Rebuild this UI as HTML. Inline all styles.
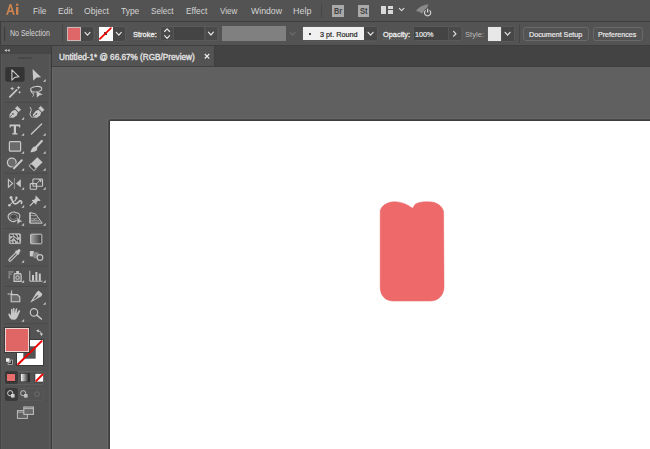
<!DOCTYPE html>
<html><head><meta charset="utf-8">
<style>
*{margin:0;padding:0;box-sizing:border-box}
html,body{width:650px;height:449px;overflow:hidden;background:#535353;font-family:"Liberation Sans",sans-serif}
.a{position:absolute}
.t{position:absolute;white-space:nowrap;line-height:1;transform-origin:0 0}
svg{position:absolute;overflow:visible}
</style></head><body>
<div class="a" style="left:0px;top:0px;width:650px;height:21px;background:#535353"></div>
<div class="a" style="left:0px;top:21px;width:650px;height:1px;background:#3e3e3e"></div>
<svg style="left:0;top:0" width="1" height="1"><path fill-rule="evenodd" d="M6.1,14.7 L9.6,3.9 L11.3,3.9 L14.8,14.7 L12.9,14.7 L12.1,12.1 L8.8,12.1 L8.0,14.7 Z M9.3,10.6 L10.45,6.7 L11.6,10.6 Z" fill="#cd8450"/><rect x="16" y="7" width="2.3" height="7.7" fill="#cd8450"/><rect x="16" y="3.7" width="2.3" height="2" fill="#cd8450"/></svg>
<div class="a" style="left:321px;top:3px;width:1px;height:15px;background:#474747"></div>
<div class="a" style="left:0px;top:22px;width:650px;height:23px;background:#535353"></div>
<div class="a" style="left:0px;top:21px;width:1px;height:25px;background:#3e3e3e"></div>
<div class="a" style="left:0px;top:45px;width:650px;height:1px;background:#3e3e3e"></div>
<svg style="left:0;top:0" width="650" height="60"><rect x="4" y="27.2" width="1.3" height="1.5" fill="#3a3a3a"/><rect x="4" y="29.2" width="1.3" height="1.5" fill="#3a3a3a"/><rect x="4" y="31.2" width="1.3" height="1.5" fill="#3a3a3a"/><rect x="4" y="33.2" width="1.3" height="1.5" fill="#3a3a3a"/><rect x="4" y="35.2" width="1.3" height="1.5" fill="#3a3a3a"/><rect x="4" y="37.2" width="1.3" height="1.5" fill="#3a3a3a"/><rect x="4" y="39.2" width="1.3" height="1.5" fill="#3a3a3a"/></svg>
<div class="a" style="left:62px;top:24px;width:1px;height:19px;background:#474747"></div>
<div class="a" style="left:332.2px;top:4.8px;width:11.9px;height:11.8px;background:#a9a9a9"></div>
<div class="a" style="left:357.8px;top:4.8px;width:11.6px;height:11.8px;background:#a9a9a9"></div>
<div class="a" style="left:380.8px;top:5.7px;width:5.7px;height:8.2px;background:#d8d8d8"></div>
<div class="a" style="left:387.6px;top:5.7px;width:5.5px;height:3.7px;background:#d8d8d8"></div>
<div class="a" style="left:387.6px;top:10.2px;width:5.5px;height:3.7px;background:#d8d8d8"></div>
<svg style="left:0;top:0" width="1" height="1"><path d="M399.3,8.3 L401.6,10.7 L403.90000000000003,8.3" fill="none" stroke="#dcdcdc" stroke-width="1.1" stroke-linecap="round" stroke-linejoin="round"/></svg>
<svg style="left:0;top:0" width="1" height="1"><path d="M416.6,10 C419,7 423,4.6 428.4,4.2 C427.6,7.6 425.4,10.6 421.6,13.6 Z" fill="#8a8a8a"/><path d="M418,11.6 L415.8,11.2 L417.8,9.2 Z" fill="#8a8a8a"/><circle cx="427.6" cy="12.8" r="4.2" fill="#535353"/><path d="M425.6,10.4 A3.1,3.1 0 1 0 429.6,10.4" fill="none" stroke="#d4d4d4" stroke-width="1.2"/><line x1="427.6" y1="8.8" x2="427.6" y2="12.6" stroke="#d4d4d4" stroke-width="1.2"/></svg>
<div class="a" style="left:65px;top:26px;width:30px;height:16px;border:1px solid #5a5a5a;border-radius:3px"></div>
<div class="a" style="left:81px;top:27px;width:12px;height:14px;background:#474747;border-radius:0 2px 2px 0"></div>
<div class="a" style="left:67px;top:27px;width:14px;height:14px;background:#e06767;border:1px solid #d0b8b8"></div>
<svg style="left:0;top:0" width="1" height="1"><path d="M85.0,32.4 L87.5,35.199999999999996 L90.0,32.4" fill="none" stroke="#e6e6e6" stroke-width="1.15" stroke-linecap="round" stroke-linejoin="round"/></svg>
<div class="a" style="left:96.5px;top:26px;width:29.5px;height:16px;border:1px solid #5a5a5a;border-radius:3px"></div>
<div class="a" style="left:112.5px;top:27px;width:12px;height:14px;background:#474747;border-radius:0 2px 2px 0"></div>
<div class="a" style="left:98.5px;top:27px;width:14px;height:14px;background:#fdfdfd"></div>
<div class="a" style="left:103.6px;top:32.1px;width:3.2px;height:3.3px;background:#4e4e4e"></div>
<svg style="left:0;top:0" width="1" height="1"><line x1="99.9" y1="38.9" x2="110.9" y2="28.1" stroke="#f20000" stroke-width="1.7" stroke-linecap="round"/></svg>
<svg style="left:0;top:0" width="1" height="1"><path d="M116.3,32.4 L118.8,35.199999999999996 L121.3,32.4" fill="none" stroke="#e6e6e6" stroke-width="1.15" stroke-linecap="round" stroke-linejoin="round"/></svg>
<svg style="left:0;top:0" width="1" height="1"><line x1="134" y1="39.3" x2="156" y2="39.3" stroke="#7a7a7a" stroke-width="0.6" stroke-dasharray="0.8 0.8"/></svg>
<div class="a" style="left:160px;top:26px;width:58.5px;height:15px;border:1px solid #5a5a5a;border-radius:3px"></div>
<div class="a" style="left:161px;top:27px;width:11.5px;height:13px;background:#4a4a4a"></div>
<svg style="left:0;top:0" width="1" height="1"><path d="M164.6,31.5 L167.1,28.9 L169.6,31.5" fill="none" stroke="#e6e6e6" stroke-width="1.15" stroke-linecap="round" stroke-linejoin="round"/></svg>
<svg style="left:0;top:0" width="1" height="1"><path d="M164.6,35.7 L167.1,38.3 L169.6,35.7" fill="none" stroke="#e6e6e6" stroke-width="1.15" stroke-linecap="round" stroke-linejoin="round"/></svg>
<div class="a" style="left:174.2px;top:27.4px;width:30.2px;height:12.3px;background:#444444"></div>
<div class="a" style="left:205.7px;top:27.4px;width:11.8px;height:12.3px;background:#4a4a4a"></div>
<svg style="left:0;top:0" width="1" height="1"><path d="M208.4,32.2 L210.9,35.0 L213.4,32.2" fill="none" stroke="#e6e6e6" stroke-width="1.15" stroke-linecap="round" stroke-linejoin="round"/></svg>
<div class="a" style="left:222px;top:26.2px;width:64px;height:14.6px;background:#808080"></div>
<svg style="left:0;top:0" width="1" height="1"><path d="M290.2,32.300000000000004 L292.7,35.1 L295.2,32.300000000000004" fill="none" stroke="#6c6c6c" stroke-width="1.15" stroke-linecap="round" stroke-linejoin="round"/></svg>
<div class="a" style="left:302px;top:26px;width:76px;height:15.5px;border:1px solid #5a5a5a;border-radius:3px"></div>
<div class="a" style="left:303.4px;top:27px;width:61px;height:13.4px;background:#f0f0f0"></div>
<div class="a" style="left:309.1px;top:33.1px;width:1.9px;height:1.9px;background:#111;border-radius:50%"></div>
<div class="a" style="left:364.4px;top:27px;width:12.5px;height:13.4px;background:#474747"></div>
<svg style="left:0;top:0" width="1" height="1"><path d="M368.1,32.300000000000004 L370.6,35.1 L373.1,32.300000000000004" fill="none" stroke="#e6e6e6" stroke-width="1.15" stroke-linecap="round" stroke-linejoin="round"/></svg>
<svg style="left:0;top:0" width="1" height="1"><line x1="383" y1="39.3" x2="409" y2="39.3" stroke="#7a7a7a" stroke-width="0.6" stroke-dasharray="0.8 0.8"/></svg>
<div class="a" style="left:413px;top:26px;width:49.5px;height:15px;border:1px solid #5a5a5a;border-radius:3px"></div>
<div class="a" style="left:414.2px;top:27px;width:34.3px;height:13px;background:#444444"></div>
<div class="a" style="left:448.5px;top:27px;width:12.7px;height:13px;background:#4a4a4a"></div>
<svg style="left:0;top:0" width="1" height="1"><path d="M453.6,31.4 L456,33.8 L453.6,36.2" fill="none" stroke="#e6e6e6" stroke-width="1.2" stroke-linecap="round" stroke-linejoin="round"/></svg>
<div class="a" style="left:486.5px;top:26px;width:28.5px;height:16px;border:1px solid #5a5a5a;border-radius:3px"></div>
<div class="a" style="left:487.7px;top:27px;width:13.8px;height:13.8px;background:#e8e8e8"></div>
<div class="a" style="left:501.5px;top:27px;width:12.3px;height:13.8px;background:#474747"></div>
<svg style="left:0;top:0" width="1" height="1"><path d="M505.1,32.300000000000004 L507.6,35.1 L510.1,32.300000000000004" fill="none" stroke="#e6e6e6" stroke-width="1.15" stroke-linecap="round" stroke-linejoin="round"/></svg>
<div class="a" style="left:519px;top:24px;width:1px;height:19px;background:#474747"></div>
<div class="a" style="left:523.2px;top:27.2px;width:65.7px;height:13.5px;border:1px solid #696969;border-radius:3px"></div>
<div class="a" style="left:593px;top:27.2px;width:50px;height:13.5px;border:1px solid #696969;border-radius:3px"></div>
<div class="a" style="left:52px;top:46px;width:598px;height:20px;background:#434343"></div>
<div class="a" style="left:52px;top:46px;width:162px;height:20px;background:#535353"></div>
<div class="a" style="left:214px;top:46px;width:1px;height:20px;background:#3e3e3e"></div>
<div class="a" style="left:52px;top:66px;width:598px;height:1px;background:#404040"></div>
<svg style="left:0;top:0" width="1" height="1"><path d="M205.2,54.4 L208.9,58.1 M208.9,54.4 L205.2,58.1" stroke="#f2f2f2" stroke-width="1.15" stroke-linecap="square"/></svg>
<div class="a" style="left:52px;top:67px;width:598px;height:382px;background:#606060"></div>
<div class="a" style="left:107px;top:118px;width:543px;height:331px;background:#676767;border-radius:4px 0 0 0"></div>
<div class="a" style="left:108px;top:119px;width:542px;height:330px;background:#484848;border-radius:3px 0 0 0"></div>
<div class="a" style="left:109px;top:120px;width:541px;height:329px;background:#3c3c3c;border-radius:2px 0 0 0"></div>
<div class="a" style="left:110px;top:121px;width:540px;height:328px;background:#ffffff"></div>
<svg style="left:0;top:0" width="1" height="1"><path d="M380.2,211 C381,206.5 386,202.2 393.8,201.8 C400.5,201.6 406.5,203.8 412.6,208.3 L415.2,204.2 C418.5,202.3 422.5,201.8 428.3,201.8 C435.5,201.8 442,205 443.6,211.5 L444,287 C444,295 438.5,301 430.2,301 L393,301 C385.5,301 380.2,295.5 380.2,287.4 Z" fill="#ee6a6a" stroke="#e96464" stroke-width="0.5"/></svg>
<div class="a" style="left:0px;top:46px;width:51px;height:403px;background:#535353"></div>
<div class="a" style="left:0px;top:46px;width:51px;height:8px;background:#474747"></div>
<div class="a" style="left:0px;top:46px;width:1px;height:403px;background:#454545"></div>
<div class="a" style="left:51px;top:46px;width:1px;height:403px;background:#3a3a3a"></div>
<div class="a" style="left:1px;top:54px;width:1px;height:395px;background:#585858"></div>
<div class="a" style="left:49px;top:55px;width:1px;height:394px;background:#5a5a5a"></div>
<div class="a" style="left:52px;top:67px;width:1px;height:382px;background:#686868"></div>
<svg style="left:0;top:0" width="1" height="1"><path d="M6.8,49 L4.3,50.4 L6.8,51.8 Z M9.6,49 L7.1,50.4 L9.6,51.8 Z" fill="#d0d0d0"/></svg>
<svg style="left:0;top:0" width="1" height="1"><rect x="18.5" y="57.3" width="1.3" height="1.5" fill="#3a3a3a"/><rect x="20.8" y="57.3" width="1.3" height="1.5" fill="#3a3a3a"/><rect x="23.1" y="57.3" width="1.3" height="1.5" fill="#3a3a3a"/><rect x="25.4" y="57.3" width="1.3" height="1.5" fill="#3a3a3a"/><rect x="27.7" y="57.3" width="1.3" height="1.5" fill="#3a3a3a"/><rect x="30.0" y="57.3" width="1.3" height="1.5" fill="#3a3a3a"/></svg>
<svg style="left:0;top:0" width="52" height="449"><rect x="4" y="101.9" width="43" height="1" fill="#4a4a4a"/><rect x="4" y="172.8" width="43" height="1" fill="#4a4a4a"/><rect x="4" y="228.0" width="43" height="1" fill="#4a4a4a"/><rect x="4" y="265.5" width="43" height="1" fill="#4a4a4a"/><rect x="4" y="285.9" width="43" height="1" fill="#4a4a4a"/><rect x="4" y="323.2" width="43" height="1" fill="#4a4a4a"/><rect x="5.3" y="67.1" width="19.3" height="14.6" rx="2" fill="#343434"/><path d="M11.9,69.8 L19,76.8 L14.8,77.4 L11.9,80.2 Z" fill="none" stroke="#c8c8c8" stroke-width="1.15" stroke-linejoin="round"/><path d="M32.6,69 L41.1,77.2 L36.6,77.6 L33.2,80.8 Z" fill="#c8c8c8" stroke="none" stroke-width="1" /><path d="M45.7,79 L45.7,81.7 L43,81.7 Z" fill="#c4c4c4"/><path d="M9.8,96.8 L16.8,89.8" fill="none" stroke="#c8c8c8" stroke-width="1.7" stroke-linecap="round"/><path d="M12.2,86.6 L12.9,88 L14.3,88.6 L12.9,89.2 L12.2,90.6 L11.5,89.2 L10.1,88.6 L11.5,88 Z" fill="#c8c8c8" stroke="none" stroke-width="1" /><path d="M18.6,85.8 L19.2,87.1 L20.5,87.7 L19.2,88.3 L18.6,89.6 L18,88.3 L16.7,87.7 L18,87.1 Z" fill="#c8c8c8" stroke="none" stroke-width="1" /><path d="M19.6,90.8 L20.1,91.8 L21.1,92.3 L20.1,92.8 L19.6,93.8 L19.1,92.8 L18.1,92.3 L19.1,91.8 Z" fill="#c8c8c8" stroke="none" stroke-width="1" /><ellipse cx="36.2" cy="89.2" rx="5.6" ry="2.7" transform="rotate(-8 36.2 89.2)" fill="none" stroke="#c8c8c8" stroke-width="1.1"/><path d="M31.6,90.4 C30.8,92 31.6,93.4 33,93.4 C34.2,93.4 34,95.4 32.6,96.6" fill="none" stroke="#c8c8c8" stroke-width="1.0" /><path d="M36,90.2 L43.4,94.8 L39.8,95.5 L36.6,98 Z" fill="#c8c8c8" stroke="#535353" stroke-width="0.6" /><path d="M9.2,117.6 L9.8,114.2 L12.2,111 L15.2,109.8 L17.8,112.4 L16.8,115.2 L13.6,117.8 Z" fill="#c8c8c8" stroke="none" stroke-width="1" /><path d="M15.3,108.3 L17.3,106.3 L20.7,109.7 L18.7,111.7 Z" fill="#c8c8c8" stroke="#c8c8c8" stroke-width="0.6" stroke-linejoin="round"/><path d="M9.6,117.2 L12.6,114.2" fill="none" stroke="#5e5e5e" stroke-width="0.9" /><circle cx="13" cy="113.8" r="0.9" fill="#5e5e5e"/><path d="M24.099999999999998,117 L24.099999999999998,119.7 L21.4,119.7 Z" fill="#c4c4c4"/><path d="M32.599999999999994,117.6 L33.2,114.2 L35.599999999999994,111 L38.599999999999994,109.8 L41.2,112.4 L40.2,115.2 L37.0,117.8 Z" fill="#c8c8c8" stroke="none" stroke-width="1" /><path d="M38.7,108.3 L40.7,106.3 L44.099999999999994,109.7 L42.099999999999994,111.7 Z" fill="#c8c8c8" stroke="#c8c8c8" stroke-width="0.6" stroke-linejoin="round"/><path d="M33.0,117.2 L36.0,114.2" fill="none" stroke="#5e5e5e" stroke-width="0.9" /><circle cx="36.4" cy="113.8" r="0.9" fill="#5e5e5e"/><path d="M30,107 C31.2,108.4 31.6,110 30.6,112 C29.6,114 30,116.6 32.4,117.4" fill="none" stroke="#c8c8c8" stroke-width="1.0" /><path d="M9.6,124.4 L20.2,124.4 L20.2,127.6 L19.2,127.6 L18.8,126.2 L16,126.2 L16,133 L17.6,133.4 L17.6,134.6 L12.2,134.6 L12.2,133.4 L13.8,133 L13.8,126.2 L11,126.2 L10.6,127.6 L9.6,127.6 Z" fill="#c8c8c8" stroke="none" stroke-width="1" /><path d="M24.099999999999998,133 L24.099999999999998,135.7 L21.4,135.7 Z" fill="#c4c4c4"/><path d="M31.4,134 L41.6,124" fill="none" stroke="#c8c8c8" stroke-width="1.3" stroke-linecap="round"/><path d="M45.7,133 L45.7,135.7 L43,135.7 Z" fill="#c4c4c4"/><rect x="9.4" y="141.6" width="11.2" height="9.6" rx="1" fill="#6b6b6b" stroke="#c8c8c8" stroke-width="1.2"/><path d="M24.099999999999998,151 L24.099999999999998,153.7 L21.4,153.7 Z" fill="#c4c4c4"/><path d="M41.8,141 L35.8,147.6" fill="none" stroke="#c8c8c8" stroke-width="2.2" stroke-linecap="round"/><path d="M35.6,146.6 C37.4,147.2 37.8,149 36.6,150.4 C35.2,151.8 32.4,152 30.4,152.2 C31,150.4 31.6,148.6 32.8,147.4 C33.6,146.6 34.6,146.4 35.6,146.6 Z" fill="#c8c8c8" stroke="none" stroke-width="1" /><path d="M45.7,151 L45.7,153.7 L43,153.7 Z" fill="#c4c4c4"/><circle cx="11.8" cy="162.6" r="4.4" fill="#6b6b6b" stroke="#c8c8c8" stroke-width="1.2"/><path d="M14,168.2 L21.8,160.2" fill="none" stroke="#535353" stroke-width="3.4" stroke-linecap="round"/><path d="M14,168.2 L21.8,160.2" fill="none" stroke="#c8c8c8" stroke-width="2.0" stroke-linecap="round"/><path d="M24.099999999999998,168 L24.099999999999998,170.7 L21.4,170.7 Z" fill="#c4c4c4"/><path d="M37.3,157.2 L42.6,162.2 L36.2,168.6 L30.9,163.6 Z" fill="#c8c8c8" stroke="none" stroke-width="1" /><path d="M33.6,166.2 L34,166.6 L36.2,168.6 L34,170.6 L29,165.8 L31,163.6 Z" fill="#535353" stroke="#c8c8c8" stroke-width="1.0" /><path d="M31.4,165.6 L34.2,168.4" fill="none" stroke="#3a3a3a" stroke-width="1.4" /><path d="M45.7,168 L45.7,170.7 L43,170.7 Z" fill="#c4c4c4"/><path d="M8.4,179.6 L12.6,183.4 L8.4,187.2 Z" fill="none" stroke="#c8c8c8" stroke-width="1.1" /><path d="M20.8,179.2 L16,183.4 L20.8,187.6 Z" fill="#c8c8c8" stroke="none" stroke-width="1" /><path d="M14.4,178 L14.4,189" fill="none" stroke="#9a9a9a" stroke-width="0.9" /><path d="M24.099999999999998,187 L24.099999999999998,189.7 L21.4,189.7 Z" fill="#c4c4c4"/><rect x="32.9" y="179" width="9.6" height="7.2" rx="0.8" fill="none" stroke="#c8c8c8" stroke-width="1.1"/><path d="M35.4,184.8 L39.6,180.8" fill="none" stroke="#c8c8c8" stroke-width="1.0" /><path d="M41.4,179.2 L41.2,182.6 L38,179.4 Z" fill="#c8c8c8" stroke="none" stroke-width="1" /><rect x="30.2" y="183.6" width="6.4" height="5.6" rx="0.8" fill="none" stroke="#c8c8c8" stroke-width="1.1"/><path d="M45.7,187 L45.7,189.7 L43,189.7 Z" fill="#c4c4c4"/><circle cx="11" cy="197.4" r="1.5" fill="#c8c8c8"/><circle cx="16.4" cy="197.8" r="1.2" fill="#c8c8c8"/><path d="M11.2,198.6 C12.4,200 12.4,201.8 13.4,203 C14.8,204.4 17.2,203.8 18.6,202 C19.6,200.8 20.8,200.4 21.4,201.4 C21.8,202 21.8,202.8 21.4,203.4" fill="none" stroke="#c8c8c8" stroke-width="1.7" stroke-linecap="round"/><path d="M13,201.6 C14.6,201.6 15.6,200.6 16.2,199" fill="none" stroke="#c8c8c8" stroke-width="1.2" stroke-linecap="round"/><circle cx="9.4" cy="205.2" r="1.3" fill="#c8c8c8"/><path d="M9.6,205 L12.8,202.2" fill="none" stroke="#c8c8c8" stroke-width="1.0" /><path d="M24.099999999999998,205 L24.099999999999998,207.7 L21.4,207.7 Z" fill="#c4c4c4"/><path d="M35.8,195.6 L40.6,200.4 L39.6,201 L38.2,200.8 L36.4,202.6 L36.6,204 L35.8,204.6 L31.8,200.6 L32.4,199.8 L33.8,200 L35.6,198.2 L35.4,196.8 Z" fill="#c8c8c8" stroke="none" stroke-width="1" /><path d="M30.2,205.6 L33.6,202.2" fill="none" stroke="#c8c8c8" stroke-width="1.2" stroke-linecap="round"/><path d="M45.7,205 L45.7,207.7 L43,207.7 Z" fill="#c4c4c4"/><path d="M9.2,219.4 C7.4,217.4 7.8,214.2 10.4,213.4 C11.8,211.8 14.8,211.6 16.2,212.8 C18.6,212.8 20.4,214.6 19.8,217 C19.4,219 17.6,220.6 15.8,220.8 C14,222.2 10.8,221.8 9.2,219.4 Z" fill="none" stroke="#c8c8c8" stroke-width="1.1" /><ellipse cx="13.6" cy="216.8" rx="3.6" ry="2.6" fill="#464646" stroke="#8c8c8c" stroke-width="0.8"/><path d="M16.8,217.2 L22.6,221.6 L19.6,222.2 L17.4,224.4 Z" fill="#c8c8c8" stroke="#535353" stroke-width="0.5" /><path d="M24.099999999999998,223 L24.099999999999998,225.7 L21.4,225.7 Z" fill="#c4c4c4"/><path d="M30,212.6 L35.4,213.8 L42.2,223.2 L30,223.2 Z" fill="none" stroke="#c8c8c8" stroke-width="1.0" /><path d="M30,215.6 L36.4,215.6 M30,218.8 L37.6,218.8 M30,223.2 L36.2,218 M31,220.6 L39.2,220.6 M32.6,222 L40.6,222" fill="none" stroke="#b0b0b0" stroke-width="0.7" /><path d="M30,212.6 L30,223.2" fill="none" stroke="#c8c8c8" stroke-width="1.4" /><path d="M45.7,223 L45.7,225.7 L43,225.7 Z" fill="#c4c4c4"/><rect x="9.2" y="233.8" width="11.4" height="9.8" rx="0.8" fill="#b4b4b4" stroke="#c4c4c4" stroke-width="0.8"/><path d="M10.4,235.2 L12.4,235.6 M14.4,235 L16.6,237.2 M18.2,235.2 L18.8,236.6 M10.8,239.6 L13,237.6 M14.8,238.4 L17,240.6 M18.4,240.4 L18.8,242.2 M11,241.8 L11.6,242.4 M14,241.6 L14.4,242.4" fill="none" stroke="#3c3c3c" stroke-width="1.2" stroke-linecap="round"/><defs><linearGradient id="gr" x1="0" x2="1" y1="0" y2="0"><stop offset="0" stop-color="#a8a8a8"/><stop offset="1" stop-color="#383838"/></linearGradient><linearGradient id="gr2" x1="0" x2="1" y1="0" y2="0"><stop offset="0" stop-color="#ffffff"/><stop offset="1" stop-color="#111"/></linearGradient></defs><rect x="30.6" y="234.2" width="11.2" height="9.6" rx="0.6" fill="url(#gr)" stroke="#c8c8c8" stroke-width="1"/><path d="M9.4,261 C8.8,260.4 8.8,259.6 9.4,259 L16,252.4 L17.6,254 L11,260.6 C10.4,261.2 9.8,261.4 9.4,261 Z" fill="none" stroke="#c8c8c8" stroke-width="1.1" /><path d="M15.2,251.6 L18.4,254.8 L19.6,253.6 L19,253 C20.6,251.8 21,250.4 20,249.6 C19.2,248.8 17.8,249.2 16.6,250.8 L16,250.2 Z" fill="#c8c8c8" stroke="none" stroke-width="1" /><path d="M24.099999999999998,260 L24.099999999999998,262.7 L21.4,262.7 Z" fill="#c4c4c4"/><rect x="29.8" y="251" width="4" height="5.4" fill="#c8c8c8"/><circle cx="36" cy="255.2" r="3.2" fill="#8a8a8a"/><circle cx="40" cy="257.4" r="2.8" fill="#535353" stroke="#c8c8c8" stroke-width="1.1"/><path d="M14.6,273.6 L20.6,273.6 L21.2,275 L21.2,281.4 L14,281.4 L14,275 Z" fill="#6b6b6b" stroke="#c8c8c8" stroke-width="1.1" /><rect x="16.2" y="271" width="2.8" height="2.4" fill="#c8c8c8"/><circle cx="17.6" cy="277.6" r="1.8" fill="none" stroke="#c8c8c8" stroke-width="0.9"/><rect x="8.6" y="271.4" width="1.1" height="1.1" fill="#c8c8c8"/><rect x="10.4" y="271.4" width="1.1" height="1.1" fill="#c8c8c8"/><rect x="12.2" y="271.4" width="1.1" height="1.1" fill="#c8c8c8"/><rect x="8.6" y="273.4" width="1.1" height="1.1" fill="#c8c8c8"/><rect x="10.4" y="273.4" width="1.1" height="1.1" fill="#c8c8c8"/><rect x="8.6" y="275.4" width="1.1" height="1.1" fill="#c8c8c8"/><rect x="8.6" y="277.2" width="1.1" height="1.1" fill="#c8c8c8"/><path d="M24.099999999999998,280 L24.099999999999998,282.7 L21.4,282.7 Z" fill="#c4c4c4"/><path d="M29.8,270.8 L29.8,281.2 L42.4,281.2" fill="none" stroke="#c8c8c8" stroke-width="1.0" /><rect x="32" y="275" width="2" height="5.8" fill="#c8c8c8"/><rect x="35.4" y="272" width="2" height="8.8" fill="#c8c8c8"/><rect x="38.8" y="273.6" width="2" height="7.2" fill="#c8c8c8"/><path d="M45.7,280 L45.7,282.7 L43,282.7 Z" fill="#c4c4c4"/><path d="M7.6,294 L12.6,294 M11.6,290.4 L11.6,296" fill="none" stroke="#c8c8c8" stroke-width="1.0" /><path d="M11.2,294.6 L17.4,294.6 L19.8,297 L19.8,301.8 L11.2,301.8 Z" fill="#6b6b6b" stroke="#c8c8c8" stroke-width="1.1" /><path d="M30.1,302.8 L36.4,292.4 L38.6,290.6 L42.4,294 L41.4,296.2 Z" fill="#c8c8c8" stroke="none" stroke-width="1" stroke-linejoin="round"/><path d="M33.2,299.8 C34.6,297.6 36.4,295.6 38.6,294.8 C37.8,297 35.8,299 33.2,299.8 Z" fill="#535353" stroke="none" stroke-width="1" /><path d="M45.7,302 L45.7,304.7 L43,304.7 Z" fill="#c4c4c4"/><path d="M11.4,319.6 C10,318.4 8.6,316.4 8.4,314.6 C8.2,313.6 9.4,313.2 10,314 L11,315.4 L11,309.6 C11,308.6 12.5,308.6 12.5,309.6 L12.7,313 L13,308.4 C13,307.4 14.5,307.4 14.5,308.4 L14.6,313 L15.8,308.8 C16,307.8 17.4,308 17.3,309 L16.6,313.4 L18.6,310.6 C19.1,309.8 20.5,310.2 20.1,311.2 L17.8,316.6 C17,318.4 16,319.4 15,319.8 Z" fill="#c8c8c8" stroke="none" stroke-width="1" /><path d="M24.099999999999998,319 L24.099999999999998,321.7 L21.4,321.7 Z" fill="#c4c4c4"/><circle cx="34" cy="312.4" r="3.7" fill="none" stroke="#c8c8c8" stroke-width="1.2"/><path d="M36.8,315.2 L41.4,319" fill="none" stroke="#c8c8c8" stroke-width="1.6" stroke-linecap="round"/></svg>
<div class="a" style="left:16px;top:339.2px;width:27.6px;height:27.1px;background:#3a3a3a"></div>
<div class="a" style="left:17px;top:340.2px;width:25.6px;height:25.1px;background:#ffffff"></div>
<div class="a" style="left:24px;top:347.2px;width:11px;height:10.8px;background:#535353;box-shadow:0 0 0 0.6px #3a3a3a"></div>
<svg style="left:0;top:0" width="1" height="1"><line x1="17.6" y1="364.8" x2="42.2" y2="340.6" stroke="#f00000" stroke-width="2"/></svg>
<div class="a" style="left:4px;top:326.9px;width:26.3px;height:26.2px;background:#3a3a3a"></div>
<div class="a" style="left:5px;top:327.9px;width:24.3px;height:24.2px;background:#f2d4d4"></div>
<div class="a" style="left:6px;top:328.9px;width:22.3px;height:22.2px;background:#e06666"></div>
<svg style="left:0;top:0" width="1" height="1"><path d="M38,330.8 Q41.2,331 41.4,334" fill="none" stroke="#c8c8c8" stroke-width="0.9"/><path d="M36.2,330.8 L38.6,329.2 L38.6,332.4 Z M41.4,336 L39.8,333.4 L43,333.4 Z" fill="#d4d4d4"/></svg>
<svg style="left:0;top:0" width="1" height="1"><rect x="5.6" y="357.8" width="4.4" height="4.4" fill="#f2f2f2" stroke="#3a3a3a" stroke-width="0.8"/><path d="M10.4,360 L12.4,360 L12.4,364.4 L8,364.4 L8,362.6 L10.4,362.6 Z" fill="#1e1e1e" stroke="#c8c8c8" stroke-width="0.8"/></svg>
<div class="a" style="left:4.6px;top:370.6px;width:39.4px;height:14px;border:1px solid #5d5d5d;border-radius:2px"></div>
<div class="a" style="left:5.1px;top:371px;width:12.5px;height:13px;background:#3a3a3a;border-radius:2px"></div>
<div class="a" style="left:6.6px;top:373.2px;width:8.8px;height:8.8px;background:#2e2e2e"></div>
<div class="a" style="left:7.1px;top:373.6px;width:7.9px;height:7.9px;background:#e86e6e"></div>
<svg style="left:0;top:0" width="1" height="1"><rect x="20.6" y="373.4" width="9" height="8.4" fill="url(#gr2)" stroke="#2e2e2e" stroke-width="0.6"/><rect x="35" y="373.4" width="8.6" height="8.6" fill="#ffffff" stroke="#2e2e2e" stroke-width="0.6"/><line x1="35.8" y1="381.4" x2="43" y2="374" stroke="#f00000" stroke-width="1.9"/></svg>
<div class="a" style="left:4.6px;top:388px;width:39.4px;height:13.4px;border:1px solid #585858;border-radius:2px"></div>
<div class="a" style="left:5.1px;top:388.4px;width:12.5px;height:12.6px;background:#3a3a3a;border-radius:2px"></div>
<svg style="left:0;top:0" width="1" height="1"><circle cx="10.2" cy="393.2" r="2.6" fill="none" stroke="#d0d0d0" stroke-width="1"/><rect x="11" y="394" width="3.6" height="3.6" fill="#d0d0d0"/><circle cx="23.2" cy="393.2" r="2.6" fill="none" stroke="#c0c0c0" stroke-width="1"/><rect x="24" y="394" width="3.6" height="3.6" fill="#c0c0c0"/><circle cx="37" cy="394.2" r="2.4" fill="none" stroke="#6e6e6e" stroke-width="0.9"/></svg>
<svg style="left:0;top:0" width="1" height="1"><rect x="17.4" y="410.6" width="10" height="7.8" fill="#626262" stroke="#bdbdbd" stroke-width="1"/><line x1="17.4" y1="412.2" x2="27.4" y2="412.2" stroke="#bdbdbd" stroke-width="0.8"/><rect x="23.8" y="407" width="9.6" height="7.4" fill="#6a6a6a" stroke="#c4c4c4" stroke-width="1"/><line x1="23.8" y1="408.6" x2="33.4" y2="408.6" stroke="#c4c4c4" stroke-width="0.8"/></svg>
<div class="t" style="left:32.80px;top:6.69px;font-size:9.3px;font-weight:400;color:#d4d4d4;transform:scaleX(0.900);">File</div>
<div class="t" style="left:57.58px;top:6.69px;font-size:9.3px;font-weight:400;color:#d4d4d4;transform:scaleX(0.920);">Edit</div>
<div class="t" style="left:84.20px;top:6.69px;font-size:9.3px;font-weight:400;color:#d4d4d4;transform:scaleX(0.926);">Object</div>
<div class="t" style="left:121.20px;top:6.69px;font-size:9.3px;font-weight:400;color:#d4d4d4;transform:scaleX(0.905);">Type</div>
<div class="t" style="left:150.72px;top:6.69px;font-size:9.3px;font-weight:400;color:#d4d4d4;transform:scaleX(0.876);">Select</div>
<div class="t" style="left:186.10px;top:6.69px;font-size:9.3px;font-weight:400;color:#d4d4d4;transform:scaleX(0.904);">Effect</div>
<div class="t" style="left:220.00px;top:6.69px;font-size:9.3px;font-weight:400;color:#d4d4d4;transform:scaleX(0.865);">View</div>
<div class="t" style="left:250.70px;top:6.69px;font-size:9.3px;font-weight:400;color:#d4d4d4;transform:scaleX(0.936);">Window</div>
<div class="t" style="left:292.94px;top:6.69px;font-size:9.3px;font-weight:400;color:#d4d4d4;transform:scaleX(0.961);">Help</div>
<div class="t" style="left:10.15px;top:29.34px;font-size:8.3px;font-weight:400;color:#d8d8d8;transform:scaleX(0.846);">No Selection</div>
<div class="t" style="left:333.78px;top:6.92px;font-size:8.8px;font-weight:700;color:#3e3e3e;transform:scaleX(0.822);">Br</div>
<div class="t" style="left:359.60px;top:6.92px;font-size:8.8px;font-weight:700;color:#3e3e3e;transform:scaleX(0.867);">St</div>
<div class="t" style="left:132.83px;top:30.77px;font-size:7.8px;font-weight:400;color:#eeeeee;transform:scaleX(0.965);-webkit-text-stroke:0.3px #eeeeee">Stroke:</div>
<div class="t" style="left:319.87px;top:30.77px;font-size:7.8px;font-weight:400;color:#1e1e1e;transform:scaleX(0.933);-webkit-text-stroke:0.2px #1e1e1e">3 pt. Round</div>
<div class="t" style="left:382.70px;top:30.77px;font-size:7.8px;font-weight:400;color:#eeeeee;transform:scaleX(0.946);-webkit-text-stroke:0.3px #eeeeee">Opacity:</div>
<div class="t" style="left:414.87px;top:30.77px;font-size:7.8px;font-weight:400;color:#eaeaea;transform:scaleX(0.932);-webkit-text-stroke:0.2px #eaeaea">100%</div>
<div class="t" style="left:464.82px;top:30.77px;font-size:7.8px;font-weight:400;color:#b8b8b8;transform:scaleX(0.978);">Style:</div>
<div class="t" style="left:529.28px;top:30.97px;font-size:7.8px;font-weight:400;color:#ececec;transform:scaleX(0.918);-webkit-text-stroke:0.2px #ececec">Document Setup</div>
<div class="t" style="left:598.29px;top:30.97px;font-size:7.8px;font-weight:400;color:#ececec;transform:scaleX(0.910);-webkit-text-stroke:0.2px #ececec">Preferences</div>
<div class="t" style="left:58.64px;top:52.98px;font-size:8.5px;font-weight:400;color:#e4e4e4;transform:scaleX(0.963);-webkit-text-stroke:0.35px #e4e4e4">Untitled-1* @ 66.67% (RGB/Preview)</div>
</body></html>
